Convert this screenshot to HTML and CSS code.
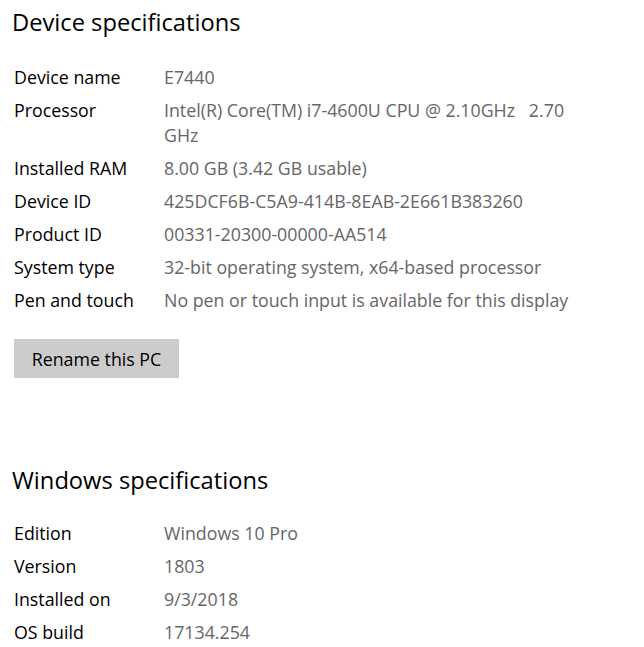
FILE: index.html
```html
<!DOCTYPE html>
<html lang="en">
<head>
  <meta charset="UTF-8">
  <title>About</title>
  <link rel="stylesheet" href="styles.css">
</head>
<body>
  <section class="block">
    <h2>Device specifications</h2>
    <div class="specs">
      <div class="label">Device name</div>
      <div class="value">E7440</div>
      <div class="label">Processor</div>
      <div class="value">Intel(R) Core(TM) i7-4600U CPU @ 2.10GHz&nbsp;&nbsp; 2.70 GHz</div>
      <div class="label">Installed RAM</div>
      <div class="value">8.00 GB (3.42 GB usable)</div>
      <div class="label">Device ID</div>
      <div class="value">425DCF6B-C5A9-414B-8EAB-2E661B383260</div>
      <div class="label">Product ID</div>
      <div class="value">00331-20300-00000-AA514</div>
      <div class="label">System type</div>
      <div class="value">32-bit operating system, x64-based processor</div>
      <div class="label">Pen and touch</div>
      <div class="value">No pen or touch input is available for this display</div>
    </div>
    <button class="rename">Rename this PC</button>
  </section>

  <section class="block windows">
    <h2>Windows specifications</h2>
    <div class="specs">
      <div class="label">Edition</div>
      <div class="value">Windows 10 Pro</div>
      <div class="label">Version</div>
      <div class="value">1803</div>
      <div class="label">Installed on</div>
      <div class="value">9/3/2018</div>
      <div class="label">OS build</div>
      <div class="value">17134.254</div>
    </div>
  </section>
</body>
</html>
```

FILE: styles.css
```css
body {
  margin: 0;
  padding: 0 14px;
  font-family: "Segoe UI", "Open Sans", sans-serif;
  font-size: 17.8px;
  color: #000;
  background: #fff;
}
h2 {
  font-weight: normal;
  font-size: 23.7px;
  line-height: 32px;
  margin: 6px 0 0 -2px;
}
.specs {
  display: grid;
  grid-template-columns: 150px 420px;
  row-gap: 8px;
  line-height: 25px;
  margin-top: 27px;
}
.windows .specs {
  margin-top: 25px;
}
.value {
  color: #666;
}
.rename {
  display: block;
  margin-top: 26px;
  width: 165px;
  height: 39px;
  border: none;
  background: #ccc;
  font-family: inherit;
  font-size: 17.8px;
  color: #000;
  padding: 0;
}
.windows {
  margin-top: 86px;
}
```
